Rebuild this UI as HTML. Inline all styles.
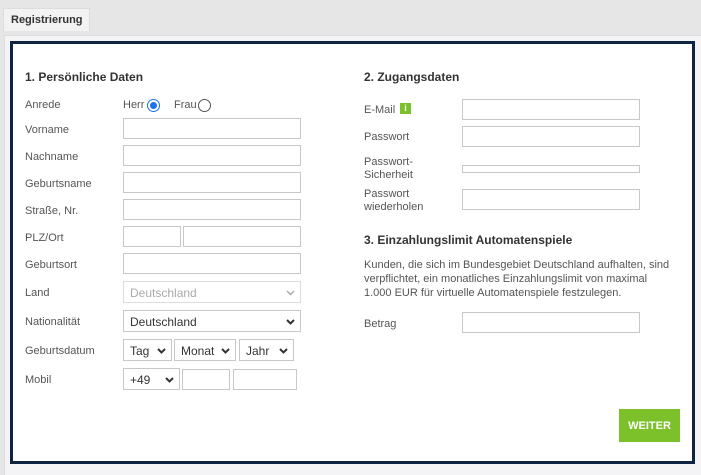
<!DOCTYPE html><html><head><meta charset="utf-8"><style>
*{box-sizing:border-box}
body{margin:0;width:701px;height:475px;background:#e6e6e6;font-family:"Liberation Sans",sans-serif;font-size:11px;color:#444;position:relative;overflow:hidden}
.a{position:absolute}
.tab{left:3px;top:8px;width:87px;height:23px;background:#f2f2f2;border:1px solid #ddd;border-bottom:none;font-size:11px;font-weight:bold;color:#333;padding:5px 0 0 7px}
.panel{left:4px;top:35px;width:697px;height:440px;background:#f4f4f6;border-left:1px solid #ddd;border-top:1px solid #ddd}
.box{left:10px;top:41px;width:685px;height:423px;background:#fff;border:3px solid #0f2440}
.h{font-size:12px;font-weight:bold;color:#333}
.i{border:1px solid #c8c8c8;background:#fff;height:21px}
.s{border:1px solid #c8c8c8;background:#fff;height:22px;font-size:12px;color:#333;padding:4px 0 0 6px}
.s svg{position:absolute;right:5px;top:8px}
.l{color:#555}
</style></head><body>
<div class="a panel"></div>
<div class="a tab">Registrierung</div>
<div class="a box"></div>
<div class="a h" style="left:25px;top:70px">1. Persönliche Daten</div>
<div class="a l" style="left:25px;top:99px">Anrede</div>
<div class="a l" style="left:123px;top:99px">Herr</div>
<div class="a" style="left:147px;top:99px;width:13px;height:13px;border-radius:50%;border:1px solid #1a73e8;background:#fff"><div style="margin:2px;width:7px;height:7px;border-radius:50%;background:#1a73e8"></div></div>
<div class="a l" style="left:174px;top:99px">Frau</div>
<div class="a" style="left:198px;top:99px;width:13px;height:13px;border-radius:50%;border:1px solid #555;background:#fff"></div>
<div class="a l" style="left:25px;top:124px">Vorname</div><div class="a i" style="left:123px;top:118px;width:178px"></div>
<div class="a l" style="left:25px;top:151px">Nachname</div><div class="a i" style="left:123px;top:145px;width:178px"></div>
<div class="a l" style="left:25px;top:178px">Geburtsname</div><div class="a i" style="left:123px;top:172px;width:178px"></div>
<div class="a l" style="left:25px;top:205px">Straße, Nr.</div><div class="a i" style="left:123px;top:199px;width:178px"></div>
<div class="a l" style="left:25px;top:232px">PLZ/Ort</div><div class="a i" style="left:123px;top:226px;width:58px"></div><div class="a i" style="left:183px;top:226px;width:118px"></div>
<div class="a l" style="left:25px;top:259px">Geburtsort</div><div class="a i" style="left:123px;top:253px;width:178px"></div>
<div class="a l" style="left:25px;top:287px">Land</div>
<div class="a s" style="left:123px;top:281px;width:178px;color:#aaa;border-color:#ddd">Deutschland<svg width="9" height="6"><path d="M1 1l3.5 3.5L8 1" stroke="#aaa" stroke-width="1.5" fill="none"/></svg></div>
<div class="a l" style="left:25px;top:316px">Nationalität</div>
<div class="a s" style="left:123px;top:310px;width:178px">Deutschland<svg width="9" height="6"><path d="M1 1l3.5 3.5L8 1" stroke="#333" stroke-width="2" fill="none"/></svg></div>
<div class="a l" style="left:25px;top:345px">Geburtsdatum</div>
<div class="a s" style="left:123px;top:339px;width:49px">Tag<svg width="9" height="6"><path d="M1 1l3.5 3.5L8 1" stroke="#333" stroke-width="2" fill="none"/></svg></div>
<div class="a s" style="left:174px;top:339px;width:62px">Monat<svg width="9" height="6"><path d="M1 1l3.5 3.5L8 1" stroke="#333" stroke-width="2" fill="none"/></svg></div>
<div class="a s" style="left:239px;top:339px;width:55px">Jahr<svg width="9" height="6"><path d="M1 1l3.5 3.5L8 1" stroke="#333" stroke-width="2" fill="none"/></svg></div>
<div class="a l" style="left:25px;top:374px">Mobil</div>
<div class="a s" style="left:123px;top:368px;width:57px">+49<svg width="9" height="6"><path d="M1 1l3.5 3.5L8 1" stroke="#333" stroke-width="2" fill="none"/></svg></div>
<div class="a i" style="left:182px;top:369px;width:48px"></div><div class="a i" style="left:233px;top:369px;width:64px"></div>

<div class="a h" style="left:364px;top:70px">2. Zugangsdaten</div>
<div class="a l" style="left:364px;top:104px">E-Mail</div>
<div class="a" style="left:400px;top:103px;width:11px;height:11px;background:#7dc12a;color:#fff;font-size:9px;font-weight:bold;text-align:center;line-height:11px">i</div>
<div class="a i" style="left:462px;top:99px;width:178px"></div>
<div class="a l" style="left:364px;top:131px">Passwort</div><div class="a i" style="left:462px;top:126px;width:178px"></div>
<div class="a l" style="left:364px;top:156px;line-height:13px">Passwort-<br>Sicherheit</div><div class="a i" style="left:462px;top:165px;width:178px;height:8px"></div>
<div class="a l" style="left:364px;top:188px;line-height:13px">Passwort<br>wiederholen</div><div class="a i" style="left:462px;top:189px;width:178px"></div>
<div class="a h" style="left:364px;top:233px">3. Einzahlungslimit Automatenspiele</div>
<div class="a l" style="left:364px;top:258px;width:320px;line-height:14px">Kunden, die sich im Bundesgebiet Deutschland aufhalten, sind<br>verpflichtet, ein monatliches Einzahlungslimit von maximal<br>1.000 EUR für virtuelle Automatenspiele festzulegen.</div>
<div class="a l" style="left:364px;top:318px">Betrag</div><div class="a i" style="left:462px;top:312px;width:178px"></div>
<div class="a" style="left:619px;top:409px;width:61px;height:33px;background:#7dc12a;color:#fff;font-weight:bold;font-size:11px;text-align:center;line-height:34px">WEITER</div>
</body></html>
